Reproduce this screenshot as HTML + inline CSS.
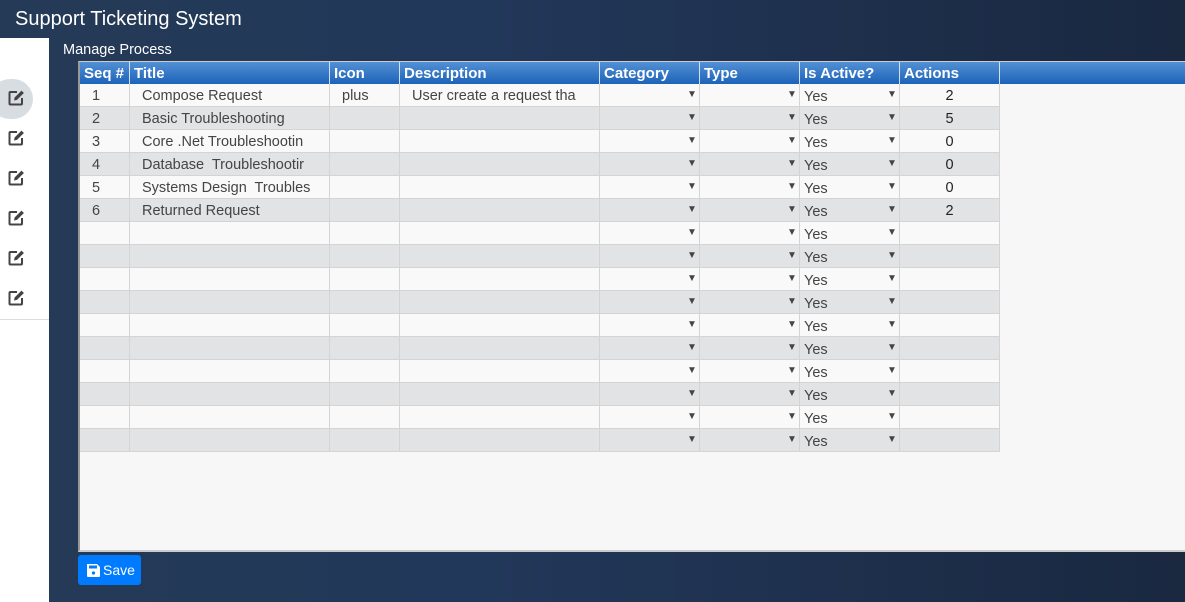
<!DOCTYPE html>
<html><head><meta charset="utf-8"><style>
*{margin:0;padding:0;box-sizing:border-box}
body{width:1185px;height:602px;overflow:hidden;font-family:"Liberation Sans",sans-serif;background:linear-gradient(90deg,#243a56 0%,#22385a 40%,#1a2840 100%);position:relative}
.title{position:absolute;left:15px;top:8px;color:#fff;font-size:20px}
.side{position:absolute;left:0;top:38px;width:49px;height:564px;background:#fff}
.side .sep{position:absolute;left:0;top:281px;width:49px;border-top:1px solid #ddd}
.hl{position:absolute;left:-10px;top:41px;width:43px;height:40px;border-radius:20px;background:#d8dde2}
.ic{position:absolute;left:8px}
.mp{position:absolute;left:63px;top:42px;color:#fff;font-size:14.5px}
.grid{position:absolute;left:78px;top:61px;width:1107px;height:491px;background:#f7f7f7;border-left:2px solid #999;border-top:1px solid #ccc;border-bottom:2px solid #ccc}
.hdr{position:absolute;left:0;top:0;width:1107px;height:22px;background:linear-gradient(#5390d4,#1c63b9)}
.c{position:absolute;top:0;height:100%;border-right:1px solid #d4d4d4;font-size:14.5px;color:#444;padding-left:4px;line-height:25px;white-space:nowrap;overflow:hidden}
.hdr .c{color:#fff;font-weight:bold;font-size:15px;line-height:24px;border-right:1.5px solid #cfe0f4}
.row{position:absolute;left:0;width:920px;height:23px;border-bottom:1px solid #d4d4d4}
.a{position:absolute;font-size:10px;color:#444;top:0;line-height:21px}
.save{position:absolute;left:78px;top:555px;width:63px;height:30px;background:#007bff;border-radius:3px;color:#fff;font-size:14px;line-height:31px;padding-left:25px}
</style></head><body>
<div class="title">Support Ticketing System</div>
<div class="side"><div class="hl"></div><div class="sep"></div></div>
<div class="mp">Manage Process</div>
<div class="grid">
<div class="hdr">
<div class="c" style="left:0;width:50px">Seq #</div>
<div class="c" style="left:50px;width:200px">Title</div>
<div class="c" style="left:250px;width:70px">Icon</div>
<div class="c" style="left:320px;width:200px">Description</div>
<div class="c" style="left:520px;width:100px">Category</div>
<div class="c" style="left:620px;width:100px">Type</div>
<div class="c" style="left:720px;width:100px">Is Active?</div>
<div class="c" style="left:820px;width:100px">Actions</div>
</div>
<div id="rows"></div>
</div>
<div class="save"><svg style="position:absolute;left:9px;top:8px" width="13" height="14" viewBox="0 0 13 14"><path d="M0 1h10l3 3v9a1 1 0 0 1-1 1H1a1 1 0 0 1-1-1z" fill="#fff"/><rect x="2" y="2.5" width="8" height="3" fill="#007bff"/><circle cx="6.5" cy="10" r="1.6" fill="#007bff"/></svg>Save</div>
<script>
var d=[["1","Compose Request","plus","User create a request tha","2"],["2","Basic Troubleshooting","","","5"],["3","Core .Net Troubleshootin","","","0"],["4","Database&nbsp; Troubleshootir","","","0"],["5","Systems Design&nbsp; Troubles","","","0"],["6","Returned Request","","","2"]];
var h="";
for(var i=0;i<16;i++){var r=d[i]||["","","","",""];var y=22+i*23;
h+='<div class="row" style="top:'+y+'px;background:'+(i%2?'#e2e3e5':'#f9f9f9')+'">'+
'<div class="c" style="left:0;width:50px;padding-left:12px">'+r[0]+'</div>'+
'<div class="c" style="left:50px;width:200px;padding-left:12px">'+r[1]+'</div>'+
'<div class="c" style="left:250px;width:70px;padding-left:12px">'+r[2]+'</div>'+
'<div class="c" style="left:320px;width:200px;padding-left:12px">'+r[3]+'</div>'+
'<div class="c" style="left:520px;width:100px"><span class="a" style="left:87px">&#9660;</span></div>'+
'<div class="c" style="left:620px;width:100px"><span class="a" style="left:87px">&#9660;</span></div>'+
'<div class="c" style="left:720px;width:100px;line-height:26px">Yes<span class="a" style="left:87px">&#9660;</span></div>'+
'<div class="c" style="left:820px;width:100px;text-align:center;padding:0;color:#222">'+r[4]+'</div></div>';}
document.getElementById('rows').innerHTML=h;
var s="";for(var k=0;k<6;k++){var t=38+53+k*40;s+='<svg class="ic" style="top:'+(t-38+ -2)+'px" width="18" height="17" viewBox="0 0 18 17"><path d="M9 3H2.5a1 1 0 0 0-1 1v10.5a1 1 0 0 0 1 1H13a1 1 0 0 0 1-1V9" fill="none" stroke="#444" stroke-width="2"/><path d="M6 11.5l.6-3L13.5 1.6l2.4 2.4L9 10.9z" fill="#444"/></svg>';}
document.querySelector('.side').insertAdjacentHTML('beforeend',s);
</script>
</body></html>
